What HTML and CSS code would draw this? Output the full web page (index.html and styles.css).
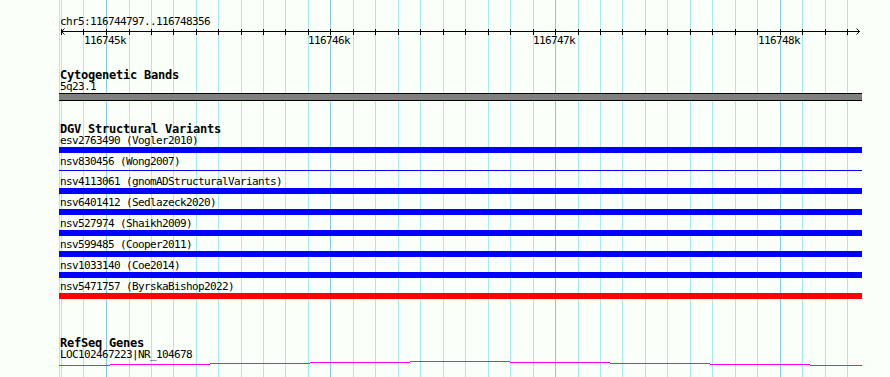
FILE: index.html
```html
<!DOCTYPE html>
<html lang="en">
<head>
    <meta charset="UTF-8">
    <meta name="viewport" content="width=device-width, initial-scale=1.0">
    <title>chr5:116744797..116748356</title>
    <link rel="stylesheet" href="styles.css">
</head>
<body>
    <main class="browser">
        <!-- 100 bp grid, drawn under all tracks -->
        <svg class="grid" width="890" height="377" viewBox="0 0 890 377" shape-rendering="crispEdges">
            <path class="grid-minor" d="M59.5 0V377M61.5 0V377M83.5 0V377M129.5 0V377M151.5 0V377M173.5 0V377M196.5 0V377M218.5 0V377M241.5 0V377M263.5 0V377M285.5 0V377M308.5 0V377M353.5 0V377M375.5 0V377M398.5 0V377M420.5 0V377M443.5 0V377M465.5 0V377M488.5 0V377M510.5 0V377M533.5 0V377M578.5 0V377M600.5 0V377M622.5 0V377M645.5 0V377M667.5 0V377M690.5 0V377M712.5 0V377M735.5 0V377M757.5 0V377M802.5 0V377M825.5 0V377M847.5 0V377"/>
            <path class="grid-major" d="M106.5 0V377M330.5 0V377M555.5 0V377M780.5 0V377"/>
        </svg>

        <header class="overview">
            <div class="locus">chr5:116744797..116748356</div>
            <svg class="ruler" width="890" height="19" viewBox="0 0 890 19">
                <g shape-rendering="crispEdges">
                    <path class="ruler-line" d="M61 4.5H860"/>
                    <path class="ruler-line" d="M61.5 2V8M83.5 2V8M106.5 2V8M129.5 2V8M151.5 2V8M173.5 2V8M196.5 2V8M218.5 2V8M241.5 2V8M263.5 2V8M285.5 2V8M308.5 2V8M330.5 2V8M353.5 2V8M375.5 2V8M398.5 2V8M420.5 2V8M443.5 2V8M465.5 2V8M488.5 2V8M510.5 2V8M533.5 2V8M555.5 2V8M578.5 2V8M600.5 2V8M622.5 2V8M645.5 2V8M667.5 2V8M690.5 2V8M712.5 2V8M735.5 2V8M757.5 2V8M780.5 2V8M802.5 2V8M825.5 2V8M847.5 2V8"/>
                </g>
                <path class="ruler-line" d="M64.5 1.5L61.5 4.5L64.5 7.5M856.5 1.5L859.5 4.5L856.5 7.5"/>
                <text class="tick-label" x="84" y="17">116745k</text>
                <text class="tick-label" x="308" y="17">116746k</text>
                <text class="tick-label" x="533" y="17">116747k</text>
                <text class="tick-label" x="758" y="17">116748k</text>
            </svg>
        </header>

        <section class="track track-cyto">
            <h2 class="track-title">Cytogenetic Bands</h2>
            <div class="feature">
                <div class="feature-label">5q23.1</div>
                <div class="glyph band"></div>
            </div>
        </section>

        <section class="track track-dgv">
            <h2 class="track-title">DGV Structural Variants</h2>
            <div class="feature">
                <div class="feature-label">esv2763490 (Vogler2010)</div>
                <div class="glyph variant"></div>
            </div>
            <div class="feature">
                <div class="feature-label">nsv830456 (Wong2007)</div>
                <div class="glyph variant thin"></div>
            </div>
            <div class="feature">
                <div class="feature-label">nsv4113061 (gnomADStructuralVariants)</div>
                <div class="glyph variant"></div>
            </div>
            <div class="feature">
                <div class="feature-label">nsv6401412 (Sedlazeck2020)</div>
                <div class="glyph variant"></div>
            </div>
            <div class="feature">
                <div class="feature-label">nsv527974 (Shaikh2009)</div>
                <div class="glyph variant"></div>
            </div>
            <div class="feature">
                <div class="feature-label">nsv599485 (Cooper2011)</div>
                <div class="glyph variant"></div>
            </div>
            <div class="feature">
                <div class="feature-label">nsv1033140 (Coe2014)</div>
                <div class="glyph variant"></div>
            </div>
            <div class="feature">
                <div class="feature-label">nsv5471757 (ByrskaBishop2022)</div>
                <div class="glyph variant loss"></div>
            </div>
        </section>

        <section class="track track-refseq">
            <h2 class="track-title">RefSeq Genes</h2>
            <div class="feature">
                <div class="feature-label">LOC102467223|NR_104678</div>
                <svg class="transcript" width="803" height="6" viewBox="0 0 803 6" shape-rendering="crispEdges">
                    <path d="M0 5.5H51M51 4.5H151M151 3.5H251M251 2.5H351M351 1.5H451M451 2.5H551M551 3.5H651M651 4.5H751M751 5.5H803"/>
                </svg>
            </div>
        </section>
    </main>
</body>
</html>
```

FILE: styles.css
```css
/* Genome browser panel */
body {
    margin: 0;
    background-color: #fafffa;
    font-family: "DejaVu Sans Mono", "Liberation Mono", monospace;
    font-size: 11px;
    letter-spacing: -0.62px;
    color: #000;
}

.browser {
    position: relative;
    width: 890px;
    height: 377px;
    overflow: hidden;
}

.grid {
    position: absolute;
    top: 0;
    left: 0;
}

.grid-minor {
    stroke: #a8eaee;
    stroke-width: 1;
    fill: none;
}

.grid-major {
    stroke: #86ccea;
    stroke-width: 1;
    fill: none;
}

/* Ruler */
.overview {
    position: relative;
    padding-top: 16px;
}

.locus {
    padding-left: 60px;
    line-height: 11px;
}

.ruler {
    display: block;
}

.ruler-line {
    stroke: #000;
    stroke-width: 1;
    fill: none;
}

.tick-label {
    font-family: "DejaVu Sans Mono", "Liberation Mono", monospace;
    font-size: 11px;
    letter-spacing: -0.62px;
    fill: #000;
}

/* Tracks */
.track {
    position: relative;
    padding-left: 59px;
}

.track-cyto {
    margin-top: 24px;
}

.track-dgv {
    margin-top: 23px;
}

.track-refseq {
    margin-top: 39px;
}

.track-title {
    margin: 0;
    padding-left: 1px;
    font-size: 12px;
    font-weight: bold;
    letter-spacing: -0.22px;
    line-height: 11px;
}

.feature-label {
    padding-left: 1px;
    line-height: 11px;
    white-space: nowrap;
}

.glyph {
    width: 803px;
    margin-top: 1px;
    margin-bottom: 3px;
}

.band {
    height: 6px;
    background-color: #808080;
    border-top: 1px solid #000;
    border-bottom: 1px solid #000;
}

.variant {
    height: 6px;
    background-color: #0000ff;
}

.variant.thin {
    height: 1px;
    margin-top: 3px;
    margin-bottom: 5px;
}

.variant.loss {
    background-color: #ff0000;
}

.transcript {
    display: block;
}

.transcript path {
    stroke: #ff00ff;
    stroke-width: 1;
    fill: none;
}
```
